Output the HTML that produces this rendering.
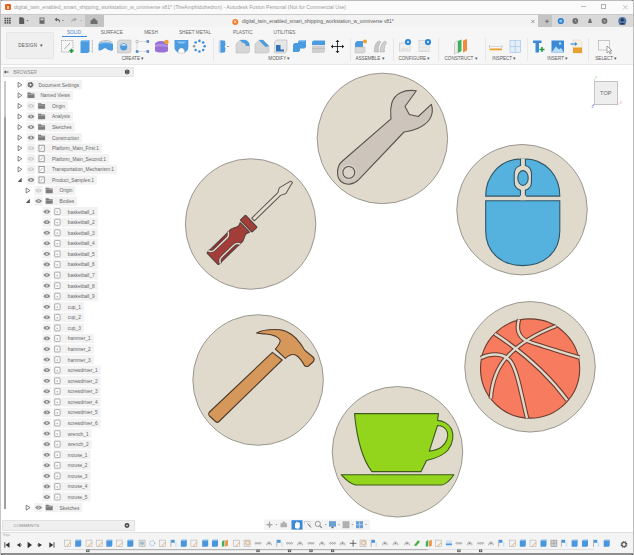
<!DOCTYPE html><html><head><meta charset="utf-8"><style>
*{margin:0;padding:0;box-sizing:border-box}
html,body{width:634px;height:555px;overflow:hidden;background:#fff;font-family:"Liberation Sans",sans-serif}
.ab{position:absolute}
.t{position:absolute;white-space:nowrap;color:#555;font-size:4.8px;line-height:6px}
.pl{position:absolute;background:#efefef;height:9px}
</style></head><body>
<div class="ab" style="left:0;top:0;width:634px;height:14px;background:#fafafa;border-top:1px solid #bdbdbd"></div>
<div class="ab" style="left:5px;top:4px;width:6px;height:6px;background:#e4601c;border-radius:1.2px"></div>
<div class="ab" style="left:7px;top:5.5px;width:2px;height:3px;background:#fbd0b0;border-radius:0.5px"></div>
<div class="t" style="left:14px;top:4.2px;font-size:5.15px;color:#9c9c9c;">digital_twin_enabled_smart_shipping_workstation_w_omniverse v81* (TheAmphiduhedron) - Autodesk Fusion Personal (Not for Commercial Use)</div>
<div class="ab" style="left:580.5px;top:5.8px;width:5px;height:0.8px;background:#bbb"></div>
<div class="ab" style="left:601px;top:3.7px;width:5px;height:5px;border:0.8px solid #b0b0b0"></div>
<svg class="ab" style="left:621.5px;top:3.5px" width="7" height="7"><path d="M1,1 L5.5,5.5 M5.5,1 L1,5.5" stroke="#b8b8b8" stroke-width="0.8"/></svg>
<div class="ab" style="left:0;top:14px;width:634px;height:13px;background:#d9d9d9;border-top:1px solid #cacaca"></div>
<div class="ab" style="left:104px;top:15px;width:434px;height:12px;background:#f3f3f3"></div>
<div class="ab" style="left:85px;top:15px;width:19px;height:12px;background:#c3c3c3"></div>
<div class="ab" style="left:538px;top:15px;width:14px;height:12px;background:#c4c4c4"></div>
<svg class="ab" style="left:0;top:0" width="634" height="30"><rect x="4.5" y="17.7" width="1.6" height="1.6" fill="#505050"/><rect x="4.5" y="19.9" width="1.6" height="1.6" fill="#505050"/><rect x="4.5" y="22.1" width="1.6" height="1.6" fill="#505050"/><rect x="6.8" y="17.7" width="1.6" height="1.6" fill="#505050"/><rect x="6.8" y="19.9" width="1.6" height="1.6" fill="#505050"/><rect x="6.8" y="22.1" width="1.6" height="1.6" fill="#505050"/><rect x="9.1" y="17.7" width="1.6" height="1.6" fill="#505050"/><rect x="9.1" y="19.9" width="1.6" height="1.6" fill="#505050"/><rect x="9.1" y="22.1" width="1.6" height="1.6" fill="#505050"/><path d="M19.2,17.3 L22.5,17.3 L24.2,19 L24.2,24 L19.2,24 Z" fill="#5a5a5a"/><path d="M26.5,20 L28.5,20 L27.5,21.2 Z" fill="#666"/><rect x="39.5" y="17.5" width="5" height="6.3" fill="#6a6a6a"/><rect x="40.5" y="18.3" width="3" height="2" fill="#cfcfcf"/><path d="M54.5,19.5 L57,17.5 L57,18.8 C59.5,18.8 60.5,20.5 60,23 C59.3,21 58.5,20.3 57,20.3 L57,21.5 Z" fill="#666"/><path d="M62,20 L64,20 L63,21.2 Z" fill="#777"/><path d="M77,19.5 L74.5,17.5 L74.5,18.8 C72,18.8 71,20.5 71.5,23 C72.2,21 73,20.3 74.5,20.3 L74.5,21.5 Z" fill="#aaa"/><path d="M80,20 L82,20 L81,21.2 Z" fill="#aaa"/><path d="M90.5,21 L94,18 L97.5,21 L97.5,24 L90.5,24 Z" fill="#6f6f6f"/><circle cx="235.3" cy="22" r="3" fill="#f07a28"/><path d="M233.8,20.5 L236.5,23 M233.8,23 L236.5,20.5" stroke="#fff" stroke-width="0.7"/><path d="M531.3,19.8 L534.5,23 M534.5,19.8 L531.3,23" stroke="#777" stroke-width="0.7"/><path d="M545,21.3 L549,21.3 M547,19.3 L547,23.3" stroke="#666" stroke-width="0.8"/><circle cx="560.8" cy="21" r="3.1" fill="#2b7fd0"/><circle cx="560.8" cy="21" r="1.6" fill="#8cc3f0"/><circle cx="575.3" cy="21" r="2.9" fill="#6e6e6e"/><path d="M575.3,19.5 L575.3,21 L576.5,21.7" stroke="#ddd" stroke-width="0.6" fill="none"/><path d="M588,23 C588.5,22 588.5,19 590,18.3 C591.5,19 591.5,22 592,23 Z" fill="#707070"/><circle cx="604.5" cy="21" r="2.9" fill="#707070"/><text x="603.3" y="22.8" font-size="4" fill="#eee" font-family="Liberation Sans">?</text><circle cx="622.3" cy="21" r="4" fill="#5577aa"/><circle cx="622.3" cy="19.8" r="1.6" fill="#223355"/><path d="M619.3,24.5 C620,22.5 624.6,22.5 625.3,24.5 Z" fill="#223355"/></svg>
<div class="t" style="left:242px;top:19.3px;font-size:4.95px;color:#5c5c5c;">digital_twin_enabled_smart_shipping_workstation_w_omniverse v81*</div>
<div class="ab" style="left:0;top:27px;width:634px;height:37.5px;background:#f6f6f6;border-bottom:1px solid #e6e6e6"></div>
<div class="ab" style="left:5.7px;top:32px;width:48px;height:27px;background:#efefef;border:1px solid #e6e6e6;border-radius:1px"></div>
<div class="t" style="left:18.3px;top:42.8px;font-size:4.6px;color:#555;letter-spacing:0.25px">DESIGN &nbsp;&#9662;</div>
<div class="t" style="left:24px;width:100px;text-align:center;top:30.4px;font-size:4.7px;color:#4a86c5;">SOLID</div>
<div class="t" style="left:61.8px;width:100px;text-align:center;top:30.4px;font-size:4.7px;color:#666;">SURFACE</div>
<div class="t" style="left:101px;width:100px;text-align:center;top:30.4px;font-size:4.7px;color:#666;">MESH</div>
<div class="t" style="left:145px;width:100px;text-align:center;top:30.4px;font-size:4.7px;color:#666;">SHEET METAL</div>
<div class="t" style="left:192.8px;width:100px;text-align:center;top:30.4px;font-size:4.7px;color:#666;">PLASTIC</div>
<div class="t" style="left:234.5px;width:100px;text-align:center;top:30.4px;font-size:4.7px;color:#666;">UTILITIES</div>
<div class="ab" style="left:61.5px;top:36.3px;width:25px;height:1.2px;background:#3a8ad8"></div>
<div class="t" style="left:83px;width:100px;text-align:center;top:56.1px;font-size:4.6px;color:#5a5a5a;">CREATE &#9662;</div>
<div class="t" style="left:229.39999999999998px;width:100px;text-align:center;top:56.1px;font-size:4.6px;color:#5a5a5a;">MODIFY &#9662;</div>
<div class="t" style="left:320px;width:100px;text-align:center;top:56.1px;font-size:4.6px;color:#5a5a5a;">ASSEMBLE &#9662;</div>
<div class="t" style="left:364.4px;width:100px;text-align:center;top:56.1px;font-size:4.6px;color:#5a5a5a;">CONFIGURE &#9662;</div>
<div class="t" style="left:411px;width:100px;text-align:center;top:56.1px;font-size:4.6px;color:#5a5a5a;">CONSTRUCT &#9662;</div>
<div class="t" style="left:454.3px;width:100px;text-align:center;top:56.1px;font-size:4.6px;color:#5a5a5a;">INSPECT &#9662;</div>
<div class="t" style="left:507.70000000000005px;width:100px;text-align:center;top:56.1px;font-size:4.6px;color:#5a5a5a;">INSERT &#9662;</div>
<div class="t" style="left:556.3px;width:100px;text-align:center;top:56.1px;font-size:4.6px;color:#5a5a5a;">SELECT &#9662;</div>
<svg class="ab" style="left:0;top:27px" width="634" height="38" viewBox="0 27 634 38"><rect x="213" y="38" width="0.7" height="23" fill="#e0e0e0"/><rect x="350" y="38" width="0.7" height="23" fill="#e0e0e0"/><rect x="393" y="38" width="0.7" height="23" fill="#e0e0e0"/><rect x="438.4" y="38" width="0.7" height="23" fill="#e0e0e0"/><rect x="485" y="38" width="0.7" height="23" fill="#e0e0e0"/><rect x="527.4" y="38" width="0.7" height="23" fill="#e0e0e0"/><rect x="588" y="38" width="0.7" height="23" fill="#e0e0e0"/><rect x="61.5" y="40.5" width="11.5" height="11.5" fill="none" stroke="#777" stroke-width="0.6" stroke-dasharray="1 0.8"/><path d="M64.5,49 L70,43" stroke="#777" stroke-width="0.6"/><path d="M69.3,50.8 L73.5,50.8 M71.4,48.7 L71.4,52.9" stroke="#1e9a3c" stroke-width="1.6"/><path d="M80.5,41.5 L82,40 L89.5,40 L89.5,51.5 L88,53 L80.5,53 Z" fill="#4a9be0"/><path d="M80.5,41.5 L82,40 L89.5,40 L88,41.5 Z" fill="#8cc4f0"/><path d="M92.3,40 L92.3,53" stroke="#555" stroke-width="0.5" stroke-dasharray="0.8 0.6"/><path d="M98.5,44 C102,41 109,41 113,44 L113,50 C111,51.5 109.5,50 108,50 C106,47.5 104,47.5 102,50 C100.5,50 99.5,51.5 98.5,50 Z" fill="#4a9be0"/><path d="M98.5,44 C102,41 109,41 113,44 C109,43 102,43 98.5,44 Z" fill="#8cc4f0"/><path d="M99,42.5 C103,40 109,40 112.5,42.5" stroke="#555" stroke-width="0.4" fill="none"/><path d="M117.5,41.5 L119,40 L131,40 L131,51.5 L129.5,53 L117.5,53 Z" fill="#d8d8d8" stroke="#aaa" stroke-width="0.4"/><circle cx="123.7" cy="46.8" r="3.6" fill="#4a9be0"/><path d="M121,45.5 C122,43.5 125,43.5 126.5,45.5 Z" fill="#e8f2fb"/><circle cx="137" cy="41.5" r="1.3" fill="none" stroke="#999" stroke-width="0.6"/><rect x="146.5" y="40.2" width="2.6" height="2.6" fill="#4a86c0"/><rect x="135.8" y="50.2" width="2.6" height="2.6" fill="#4a86c0"/><rect x="146.5" y="50.2" width="2.6" height="2.6" fill="#4a86c0"/><path d="M138.5,41.5 L146.5,41.5 M137,43 L137,50 M138.5,51.5 L146.5,51.5" stroke="#999" stroke-width="0.5" stroke-dasharray="0.8 0.6"/><path d="M155,45 C155,42 158,41 161,41 C164,41 168,42.5 168,45.5 L168,51 C166,53 157,53 155,51 Z" fill="#9a72d6"/><path d="M155,45 C158,44 164,44 168,45.5 L168,47 C164,46 158,46 155,47Z" fill="#b596e6"/><circle cx="166.5" cy="42" r="2.2" fill="#f0a02a"/><path d="M174.5,40 L188.3,40 L188.3,47 C188.3,51 185,53 181.4,53 C177.8,53 174.5,51 174.5,47 Z" fill="#4a9be0"/><path d="M176.5,41.5 L186.3,41.5 L184,43.5 L178.8,43.5 Z" fill="#8cc4f0"/><path d="M178,53 C178,49.5 179.5,48 181.4,48 C183.3,48 184.8,49.5 184.8,53 Z" fill="#fff" stroke="#999" stroke-width="0.4"/><circle cx="199.40" cy="40.90" r="1.3" fill="#3f8fd8"/><circle cx="203.15" cy="42.45" r="1.3" fill="#3f8fd8"/><circle cx="204.70" cy="46.20" r="1.3" fill="#3f8fd8"/><circle cx="203.15" cy="49.95" r="1.3" fill="#3f8fd8"/><circle cx="199.40" cy="51.50" r="1.3" fill="#3f8fd8"/><circle cx="195.65" cy="49.95" r="1.3" fill="#3f8fd8"/><circle cx="194.10" cy="46.20" r="1.3" fill="#999"/><circle cx="195.65" cy="42.45" r="1.3" fill="#3f8fd8"/><path d="M218.5,40.5 L223,40 L223,53 L218.5,52.5 Z" fill="#c8d8e8"/><path d="M220.5,40.3 L225,40.8 L225.5,45 L224.5,46.5 L225.5,48 L225,52.3 L220.5,52.7 Z" fill="#4a9be0"/><circle cx="228" cy="46.5" r="0.6" fill="#333"/><path d="M236,44 L240,40 L245,40 C248,40.5 249.5,43 249.5,46 L249.5,52 L247.5,53 L236,53 Z" fill="#d6d6d6" stroke="#aaa" stroke-width="0.4"/><path d="M240,40 L245,40 C248,40.5 249.5,43 249.5,46 L246,46 C245.5,44 244,42.5 242,42.5 Z" fill="#4a9be0"/><path d="M255,44 L259,40 L263,40 L269,46 L269,52 L267,53 L255,53 Z" fill="#d6d6d6" stroke="#aaa" stroke-width="0.4"/><path d="M259,40 L263,40 L269,46 L265.5,47 L261,42.5 Z" fill="#4a9be0"/><path d="M274.5,42 L276.5,40 L287,40 L287,51 L285,53 L274.5,53 Z" fill="#e6e6e6" stroke="#999" stroke-width="0.4"/><path d="M276,45 L280.5,45 L280.5,49.5 L284,49.5 L284,51.5 L276,51.5 Z" fill="#2f72b8"/><path d="M293,44.5 L294.5,43 L300,43 L300,50.5 L298.5,52 L293,52 Z" fill="#4a9be0"/><path d="M298,41.5 L299.5,40 L306,40 L306,47 L304.5,48.5 L298,48.5 Z" fill="#4a9be0"/><path d="M298,41.5 L299.5,40 L306,40 L304.5,41.5 Z" fill="#8cc4f0"/><path d="M312,42 L313.5,40.5 L325,40.5 L325,45 L312,45 Z" fill="#4a9be0"/><path d="M312,45.5 L325,45.5 L325,51.5 L323.5,53 L312,53 Z" fill="#d0d0d0"/><path d="M312,48.5 L325,48.5" stroke="#aaa" stroke-width="0.4"/><path d="M337.5,40 L337.5,53 M331,46.5 L344,46.5" stroke="#222" stroke-width="0.9"/><path d="M335.5,42 L337.5,40 L339.5,42 Z M335.5,51 L337.5,53 L339.5,51 Z M333,44.5 L331,46.5 L333,48.5 Z M342,44.5 L344,46.5 L342,48.5 Z" fill="#222"/><path d="M355,43 L357,41 L363,41 L363,47 L355,47 Z" fill="#4a9be0"/><path d="M355,47 L365,47 L365,52 L363.5,53 L355,53 Z" fill="#d9d9d9" stroke="#aaa" stroke-width="0.4"/><circle cx="365" cy="41.5" r="2" fill="#f0a02a"/><path d="M374.5,52 C374,47 375.5,42 379,41 L381,42 C378.5,44 378,48 378.5,52 Z" fill="#c8c8c8" stroke="#999" stroke-width="0.4"/><path d="M380,52 C380,47 382,42 385.5,41 L386.5,43 C384.5,45 384,49 384.5,52 Z" fill="#d0d0d0" stroke="#999" stroke-width="0.4"/><rect x="399.5" y="43" width="10.5" height="8" fill="#efefef" stroke="#bbb" stroke-width="0.5"/><path d="M401,49 L408,49" stroke="#bbb" stroke-width="0.5"/><circle cx="408" cy="42" r="3.1" fill="#2e86d8"/><circle cx="408" cy="42" r="1.1" fill="#e0f0ff"/><rect x="419" y="40.5" width="10" height="11" fill="#efefef" stroke="#bbb" stroke-width="0.5"/><path d="M420.5,44 L427,44 M420.5,47 L427,47 M420.5,50 L427,50" stroke="#ccc" stroke-width="0.5"/><circle cx="428" cy="42" r="3.1" fill="#2e86d8"/><circle cx="428" cy="42" r="1.1" fill="#e0f0ff"/><path d="M454.5,43 L458,40.5 L458,52 L454.5,54 Z" fill="#ececec" stroke="#999" stroke-width="0.4"/><path d="M458,41 L461.5,39.5 L461.5,51 L458,53 Z" fill="#3db05a"/><path d="M463,40.5 L467,39 L467,50.5 L463,52.5 Z" fill="#f08c40"/><path d="M489.5,45 L489.5,48 M502,45 L502,48" stroke="#999" stroke-width="0.5"/><rect x="489.5" y="46" width="12.5" height="0.5" fill="#bbb"/><rect x="489.5" y="48.5" width="12.5" height="1.8" fill="#f0a030"/><rect x="510" y="40.5" width="10.5" height="12" fill="#e4eef8" stroke="#9bbfe0" stroke-width="0.6"/><path d="M515.2,40.5 L515.2,52.5 M510,46.5 L520.5,46.5" stroke="#9bbfe0" stroke-width="0.6"/><path d="M533,40.5 L541.5,40.5 L541.5,43 L539,43 L539,52.5 L535.5,52.5 L535.5,43 L533,43 Z" fill="#3a8ad8"/><path d="M539.5,49.5 L544.5,49.5 M542,47 L542,52" stroke="#1e9a3c" stroke-width="1.5"/><rect x="551.5" y="40.5" width="12.5" height="12" fill="#3a8ad8"/><path d="M551.5,52.5 L556,46.5 L559,49.5 L561,48 L564,52.5 Z" fill="#bcdcf6"/><circle cx="560" cy="43.5" r="1.2" fill="#bcdcf6"/><path d="M573,40 L579.5,40 L582,42.5 L582,53 L573,53 Z" fill="#f6f0e0" stroke="#ccb" stroke-width="0.4"/><rect x="573" y="47.5" width="9" height="5.5" fill="#e8a030"/><path d="M570.5,44 L576,44" stroke="#3a8ad8" stroke-width="1.2"/><path d="M575,42 L577.5,44 L575,46 Z" fill="#3a8ad8"/><rect x="598.5" y="40.5" width="11" height="9.5" fill="none" stroke="#aaa" stroke-width="0.6"/><path d="M607,46 L607,53 L608.8,51.3 L610.3,54 L611.3,53.5 L609.8,50.8 L612,50.8 Z" fill="#fff" stroke="#555" stroke-width="0.5"/></svg>
<div class="ab" style="left:2.5px;top:66.9px;width:131.5px;height:9.8px;background:#efefef;border:0.7px solid #e4e4e4"></div>
<svg class="ab" style="left:0;top:66px" width="140" height="14"><path d="M4.5,6 L8.5,6 M4.5,6 L6,4.8 M4.5,6 L6,7.2" stroke="#444" stroke-width="0.9" fill="none"/><circle cx="127.2" cy="6" r="2.4" fill="#444"/><path d="M126,5.6 L127.2,4.5 L128.4,5.6 M126,6.6 L127.2,7.6 L128.4,6.6" stroke="#eee" stroke-width="0.5" fill="none"/></svg>
<div class="t" style="left:13.2px;top:70.2px;font-size:4.6px;color:#8c8c8c;">BROWSER</div>
<div class="ab" style="left:4.1px;top:80.5px;width:2.4px;height:36px;background:#c9c9c9"></div><div class="ab" style="left:4.1px;top:116.5px;width:2.4px;height:392.5px;background:#a0a0a0;border-radius:0.5px"></div>
<svg class="ab" style="left:0;top:0" width="140" height="520"><path d="M18.099999999999998,82.3 L21.9,84.8 L18.099999999999998,87.3 Z" fill="#fff" stroke="#666" stroke-width="0.8" stroke-linejoin="round"/><rect x="26.0" y="80.2" width="56.15174999999999" height="9.2" fill="#f2f2f2"/><circle cx="30.5" cy="84.8" r="2.2" fill="none" stroke="#555" stroke-width="1.4" stroke-dasharray="0.9 0.5"/><circle cx="30.5" cy="84.8" r="1.6" fill="none" stroke="#555" stroke-width="1"/><path d="M18.099999999999998,92.87 L21.9,95.37 L18.099999999999998,97.87 Z" fill="#fff" stroke="#666" stroke-width="0.8" stroke-linejoin="round"/><rect x="26.5" y="90.77000000000001" width="46.423" height="9.2" fill="#f2f2f2"/><path d="M27.5,92.57000000000001 L30.2,92.57000000000001 L31.2,93.47 L34.5,93.47 L34.5,98.07000000000001 L27.5,98.07000000000001 Z" fill="#7c7c7c"/><rect x="27.5" y="94.27000000000001" width="7" height="0.6" fill="#b8b8b8"/><path d="M18.099999999999998,103.44 L21.9,105.94 L18.099999999999998,108.44 Z" fill="#fff" stroke="#666" stroke-width="0.8" stroke-linejoin="round"/><rect x="26.7" y="101.34" width="8.6" height="9.2" fill="#f2f2f2"/><path d="M27.6,105.94 C29.3,103.44 32.7,103.44 34.4,105.94 C32.7,108.44 29.3,108.44 27.6,105.94 Z" fill="#cfcfcf"/><circle cx="31" cy="105.94" r="1.05" fill="#f2f2f2"/><circle cx="31" cy="105.94" r="0.5" fill="#cfcfcf"/><rect x="37.1" y="101.34" width="30.703250000000004" height="9.2" fill="#f2f2f2"/><path d="M38.1,103.14 L40.800000000000004,103.14 L41.800000000000004,104.03999999999999 L45.1,104.03999999999999 L45.1,108.64 L38.1,108.64 Z" fill="#7c7c7c"/><rect x="38.1" y="104.84" width="7" height="0.6" fill="#b8b8b8"/><path d="M18.099999999999998,114.00999999999999 L21.9,116.50999999999999 L18.099999999999998,119.00999999999999 Z" fill="#fff" stroke="#666" stroke-width="0.8" stroke-linejoin="round"/><rect x="26.7" y="111.91" width="8.6" height="9.2" fill="#f2f2f2"/><path d="M27.6,116.50999999999999 C29.3,114.00999999999999 32.7,114.00999999999999 34.4,116.50999999999999 C32.7,119.00999999999999 29.3,119.00999999999999 27.6,116.50999999999999 Z" fill="#8a8a8a"/><circle cx="31" cy="116.50999999999999" r="1.05" fill="#f2f2f2"/><circle cx="31" cy="116.50999999999999" r="0.5" fill="#8a8a8a"/><rect x="37.1" y="111.91" width="35.77325" height="9.2" fill="#f2f2f2"/><path d="M38.1,113.71 L40.800000000000004,113.71 L41.800000000000004,114.60999999999999 L45.1,114.60999999999999 L45.1,119.21 L38.1,119.21 Z" fill="#7c7c7c"/><rect x="38.1" y="115.41" width="7" height="0.6" fill="#b8b8b8"/><path d="M18.099999999999998,124.58 L21.9,127.08 L18.099999999999998,129.57999999999998 Z" fill="#fff" stroke="#666" stroke-width="0.8" stroke-linejoin="round"/><rect x="26.7" y="122.48" width="8.6" height="9.2" fill="#f2f2f2"/><path d="M27.6,127.08 C29.3,124.58 32.7,124.58 34.4,127.08 C32.7,129.57999999999998 29.3,129.57999999999998 27.6,127.08 Z" fill="#8a8a8a"/><circle cx="31" cy="127.08" r="1.05" fill="#f2f2f2"/><circle cx="31" cy="127.08" r="0.5" fill="#8a8a8a"/><rect x="37.1" y="122.48" width="37.642999999999994" height="9.2" fill="#f2f2f2"/><path d="M38.1,124.28 L40.800000000000004,124.28 L41.800000000000004,125.17999999999999 L45.1,125.17999999999999 L45.1,129.78 L38.1,129.78 Z" fill="#7c7c7c"/><rect x="38.1" y="125.98" width="7" height="0.6" fill="#b8b8b8"/><path d="M18.099999999999998,135.15 L21.9,137.65 L18.099999999999998,140.15 Z" fill="#fff" stroke="#666" stroke-width="0.8" stroke-linejoin="round"/><rect x="26.7" y="133.05" width="8.6" height="9.2" fill="#f2f2f2"/><path d="M27.6,137.65 C29.3,135.15 32.7,135.15 34.4,137.65 C32.7,140.15 29.3,140.15 27.6,137.65 Z" fill="#8a8a8a"/><circle cx="31" cy="137.65" r="1.05" fill="#f2f2f2"/><circle cx="31" cy="137.65" r="0.5" fill="#8a8a8a"/><rect x="37.1" y="133.05" width="44.844500000000004" height="9.2" fill="#f2f2f2"/><path d="M38.1,134.85 L40.800000000000004,134.85 L41.800000000000004,135.75 L45.1,135.75 L45.1,140.35 L38.1,140.35 Z" fill="#7c7c7c"/><rect x="38.1" y="136.55" width="7" height="0.6" fill="#b8b8b8"/><path d="M18.099999999999998,145.72 L21.9,148.22 L18.099999999999998,150.72 Z" fill="#fff" stroke="#666" stroke-width="0.8" stroke-linejoin="round"/><rect x="26.7" y="143.62" width="8.6" height="9.2" fill="#f2f2f2"/><path d="M27.6,148.22 C29.3,145.72 32.7,145.72 34.4,148.22 C32.7,150.72 29.3,150.72 27.6,148.22 Z" fill="#cfcfcf"/><circle cx="31" cy="148.22" r="1.05" fill="#f2f2f2"/><circle cx="31" cy="148.22" r="0.5" fill="#cfcfcf"/><rect x="37.1" y="143.62" width="64.84475" height="9.2" fill="#f2f2f2"/><rect x="39.0" y="145.22" width="5.2" height="6" fill="#fff" stroke="#777" stroke-width="0.7"/><path d="M40.4,149.72 L42.6,146.72" stroke="#888" stroke-width="0.6"/><path d="M18.099999999999998,156.29000000000002 L21.9,158.79000000000002 L18.099999999999998,161.29000000000002 Z" fill="#fff" stroke="#666" stroke-width="0.8" stroke-linejoin="round"/><rect x="26.7" y="154.19000000000003" width="8.6" height="9.2" fill="#f2f2f2"/><path d="M27.6,158.79000000000002 C29.3,156.29000000000002 32.7,156.29000000000002 34.4,158.79000000000002 C32.7,161.29000000000002 29.3,161.29000000000002 27.6,158.79000000000002 Z" fill="#cfcfcf"/><circle cx="31" cy="158.79000000000002" r="1.05" fill="#f2f2f2"/><circle cx="31" cy="158.79000000000002" r="0.5" fill="#cfcfcf"/><rect x="37.1" y="154.19000000000003" width="71.7935" height="9.2" fill="#f2f2f2"/><rect x="39.0" y="155.79000000000002" width="5.2" height="6" fill="#fff" stroke="#777" stroke-width="0.7"/><path d="M40.4,160.29000000000002 L42.6,157.29000000000002" stroke="#888" stroke-width="0.6"/><path d="M18.099999999999998,166.86 L21.9,169.36 L18.099999999999998,171.86 Z" fill="#fff" stroke="#666" stroke-width="0.8" stroke-linejoin="round"/><rect x="26.7" y="164.76000000000002" width="8.6" height="9.2" fill="#f2f2f2"/><path d="M27.6,169.36 C29.3,166.86 32.7,166.86 34.4,169.36 C32.7,171.86 29.3,171.86 27.6,169.36 Z" fill="#cfcfcf"/><circle cx="31" cy="169.36" r="1.05" fill="#f2f2f2"/><circle cx="31" cy="169.36" r="0.5" fill="#cfcfcf"/><rect x="37.1" y="164.76000000000002" width="79.88075" height="9.2" fill="#f2f2f2"/><rect x="39.0" y="166.36" width="5.2" height="6" fill="#fff" stroke="#777" stroke-width="0.7"/><path d="M40.4,170.86 L42.6,167.86" stroke="#888" stroke-width="0.6"/><path d="M21.7,177.63 L21.7,181.93 L17.7,181.93 Z" fill="#555"/><rect x="26.7" y="175.33" width="8.6" height="9.2" fill="#f2f2f2"/><path d="M27.6,179.93 C29.3,177.43 32.7,177.43 34.4,179.93 C32.7,182.43 29.3,182.43 27.6,179.93 Z" fill="#8a8a8a"/><circle cx="31" cy="179.93" r="1.05" fill="#f2f2f2"/><circle cx="31" cy="179.93" r="0.5" fill="#8a8a8a"/><rect x="37.1" y="175.33" width="59.7875" height="9.2" fill="#f2f2f2"/><rect x="39.0" y="176.93" width="5.2" height="6" fill="#fff" stroke="#777" stroke-width="0.7"/><path d="M40.4,181.43 L42.6,178.43" stroke="#888" stroke-width="0.6"/><path d="M26.2,188.0 L30.0,190.5 L26.2,193.0 Z" fill="#fff" stroke="#666" stroke-width="0.8" stroke-linejoin="round"/><rect x="34.300000000000004" y="185.9" width="8.6" height="9.2" fill="#f2f2f2"/><path d="M35.2,190.5 C36.9,188.0 40.300000000000004,188.0 42.0,190.5 C40.300000000000004,193.0 36.9,193.0 35.2,190.5 Z" fill="#cfcfcf"/><circle cx="38.6" cy="190.5" r="1.05" fill="#f2f2f2"/><circle cx="38.6" cy="190.5" r="0.5" fill="#cfcfcf"/><rect x="44.7" y="185.9" width="30.703249999999997" height="9.2" fill="#f2f2f2"/><path d="M45.7,187.7 L48.400000000000006,187.7 L49.400000000000006,188.6 L52.7,188.6 L52.7,193.2 L45.7,193.2 Z" fill="#7c7c7c"/><rect x="45.7" y="189.4" width="7" height="0.6" fill="#b8b8b8"/><path d="M29.8,198.76999999999998 L29.8,203.07 L25.8,203.07 Z" fill="#555"/><rect x="34.300000000000004" y="196.47" width="8.6" height="9.2" fill="#f2f2f2"/><path d="M35.2,201.07 C36.9,198.57 40.300000000000004,198.57 42.0,201.07 C40.300000000000004,203.57 36.9,203.57 35.2,201.07 Z" fill="#8a8a8a"/><circle cx="38.6" cy="201.07" r="1.05" fill="#f2f2f2"/><circle cx="38.6" cy="201.07" r="0.5" fill="#8a8a8a"/><rect x="44.7" y="196.47" width="32.57599999999999" height="9.2" fill="#f2f2f2"/><path d="M45.7,198.26999999999998 L48.400000000000006,198.26999999999998 L49.400000000000006,199.17 L52.7,199.17 L52.7,203.76999999999998 L45.7,203.76999999999998 Z" fill="#7c7c7c"/><rect x="45.7" y="199.97" width="7" height="0.6" fill="#b8b8b8"/><rect x="42.5" y="207.04" width="8.6" height="9.2" fill="#f2f2f2"/><path d="M43.4,211.64 C45.099999999999994,209.14 48.5,209.14 50.199999999999996,211.64 C48.5,214.14 45.099999999999994,214.14 43.4,211.64 Z" fill="#8a8a8a"/><circle cx="46.8" cy="211.64" r="1.05" fill="#f2f2f2"/><circle cx="46.8" cy="211.64" r="0.5" fill="#8a8a8a"/><rect x="52.9" y="207.04" width="44.85125" height="9.2" fill="#f2f2f2"/><rect x="54.699999999999996" y="208.73999999999998" width="5.4" height="5.8" fill="#fff" stroke="#8c8c8c" stroke-width="0.7" rx="0.6"/><rect x="56.6" y="211.33999999999997" width="1.4" height="1.4" fill="#aaa"/><rect x="42.5" y="217.60999999999999" width="8.6" height="9.2" fill="#f2f2f2"/><path d="M43.4,222.20999999999998 C45.099999999999994,219.70999999999998 48.5,219.70999999999998 50.199999999999996,222.20999999999998 C48.5,224.70999999999998 45.099999999999994,224.70999999999998 43.4,222.20999999999998 Z" fill="#8a8a8a"/><circle cx="46.8" cy="222.20999999999998" r="1.05" fill="#f2f2f2"/><circle cx="46.8" cy="222.20999999999998" r="0.5" fill="#8a8a8a"/><rect x="52.9" y="217.60999999999999" width="44.85125" height="9.2" fill="#f2f2f2"/><rect x="54.699999999999996" y="219.30999999999997" width="5.4" height="5.8" fill="#fff" stroke="#8c8c8c" stroke-width="0.7" rx="0.6"/><rect x="56.6" y="221.90999999999997" width="1.4" height="1.4" fill="#aaa"/><rect x="42.5" y="228.18000000000004" width="8.6" height="9.2" fill="#f2f2f2"/><path d="M43.4,232.78000000000003 C45.099999999999994,230.28000000000003 48.5,230.28000000000003 50.199999999999996,232.78000000000003 C48.5,235.28000000000003 45.099999999999994,235.28000000000003 43.4,232.78000000000003 Z" fill="#8a8a8a"/><circle cx="46.8" cy="232.78000000000003" r="1.05" fill="#f2f2f2"/><circle cx="46.8" cy="232.78000000000003" r="0.5" fill="#8a8a8a"/><rect x="52.9" y="228.18000000000004" width="44.85125" height="9.2" fill="#f2f2f2"/><rect x="54.699999999999996" y="229.88000000000002" width="5.4" height="5.8" fill="#fff" stroke="#8c8c8c" stroke-width="0.7" rx="0.6"/><rect x="56.6" y="232.48000000000002" width="1.4" height="1.4" fill="#aaa"/><rect x="42.5" y="238.75000000000003" width="8.6" height="9.2" fill="#f2f2f2"/><path d="M43.4,243.35000000000002 C45.099999999999994,240.85000000000002 48.5,240.85000000000002 50.199999999999996,243.35000000000002 C48.5,245.85000000000002 45.099999999999994,245.85000000000002 43.4,243.35000000000002 Z" fill="#8a8a8a"/><circle cx="46.8" cy="243.35000000000002" r="1.05" fill="#f2f2f2"/><circle cx="46.8" cy="243.35000000000002" r="0.5" fill="#8a8a8a"/><rect x="52.9" y="238.75000000000003" width="44.85125" height="9.2" fill="#f2f2f2"/><rect x="54.699999999999996" y="240.45000000000002" width="5.4" height="5.8" fill="#fff" stroke="#8c8c8c" stroke-width="0.7" rx="0.6"/><rect x="56.6" y="243.05" width="1.4" height="1.4" fill="#aaa"/><rect x="42.5" y="249.32000000000002" width="8.6" height="9.2" fill="#f2f2f2"/><path d="M43.4,253.92000000000002 C45.099999999999994,251.42000000000002 48.5,251.42000000000002 50.199999999999996,253.92000000000002 C48.5,256.42 45.099999999999994,256.42 43.4,253.92000000000002 Z" fill="#8a8a8a"/><circle cx="46.8" cy="253.92000000000002" r="1.05" fill="#f2f2f2"/><circle cx="46.8" cy="253.92000000000002" r="0.5" fill="#8a8a8a"/><rect x="52.9" y="249.32000000000002" width="44.85125" height="9.2" fill="#f2f2f2"/><rect x="54.699999999999996" y="251.02" width="5.4" height="5.8" fill="#fff" stroke="#8c8c8c" stroke-width="0.7" rx="0.6"/><rect x="56.6" y="253.62" width="1.4" height="1.4" fill="#aaa"/><rect x="42.5" y="259.89" width="8.6" height="9.2" fill="#f2f2f2"/><path d="M43.4,264.49 C45.099999999999994,261.99 48.5,261.99 50.199999999999996,264.49 C48.5,266.99 45.099999999999994,266.99 43.4,264.49 Z" fill="#8a8a8a"/><circle cx="46.8" cy="264.49" r="1.05" fill="#f2f2f2"/><circle cx="46.8" cy="264.49" r="0.5" fill="#8a8a8a"/><rect x="52.9" y="259.89" width="44.85125" height="9.2" fill="#f2f2f2"/><rect x="54.699999999999996" y="261.59000000000003" width="5.4" height="5.8" fill="#fff" stroke="#8c8c8c" stroke-width="0.7" rx="0.6"/><rect x="56.6" y="264.19" width="1.4" height="1.4" fill="#aaa"/><rect x="42.5" y="270.46" width="8.6" height="9.2" fill="#f2f2f2"/><path d="M43.4,275.06 C45.099999999999994,272.56 48.5,272.56 50.199999999999996,275.06 C48.5,277.56 45.099999999999994,277.56 43.4,275.06 Z" fill="#8a8a8a"/><circle cx="46.8" cy="275.06" r="1.05" fill="#f2f2f2"/><circle cx="46.8" cy="275.06" r="0.5" fill="#8a8a8a"/><rect x="52.9" y="270.46" width="44.85125" height="9.2" fill="#f2f2f2"/><rect x="54.699999999999996" y="272.16" width="5.4" height="5.8" fill="#fff" stroke="#8c8c8c" stroke-width="0.7" rx="0.6"/><rect x="56.6" y="274.76" width="1.4" height="1.4" fill="#aaa"/><rect x="42.5" y="281.03" width="8.6" height="9.2" fill="#f2f2f2"/><path d="M43.4,285.63 C45.099999999999994,283.13 48.5,283.13 50.199999999999996,285.63 C48.5,288.13 45.099999999999994,288.13 43.4,285.63 Z" fill="#8a8a8a"/><circle cx="46.8" cy="285.63" r="1.05" fill="#f2f2f2"/><circle cx="46.8" cy="285.63" r="0.5" fill="#8a8a8a"/><rect x="52.9" y="281.03" width="44.85125" height="9.2" fill="#f2f2f2"/><rect x="54.699999999999996" y="282.73" width="5.4" height="5.8" fill="#fff" stroke="#8c8c8c" stroke-width="0.7" rx="0.6"/><rect x="56.6" y="285.33" width="1.4" height="1.4" fill="#aaa"/><rect x="42.5" y="291.59999999999997" width="8.6" height="9.2" fill="#f2f2f2"/><path d="M43.4,296.2 C45.099999999999994,293.7 48.5,293.7 50.199999999999996,296.2 C48.5,298.7 45.099999999999994,298.7 43.4,296.2 Z" fill="#8a8a8a"/><circle cx="46.8" cy="296.2" r="1.05" fill="#f2f2f2"/><circle cx="46.8" cy="296.2" r="0.5" fill="#8a8a8a"/><rect x="52.9" y="291.59999999999997" width="44.85125" height="9.2" fill="#f2f2f2"/><rect x="54.699999999999996" y="293.3" width="5.4" height="5.8" fill="#fff" stroke="#8c8c8c" stroke-width="0.7" rx="0.6"/><rect x="56.6" y="295.9" width="1.4" height="1.4" fill="#aaa"/><rect x="42.5" y="302.16999999999996" width="8.6" height="9.2" fill="#f2f2f2"/><path d="M43.4,306.77 C45.099999999999994,304.27 48.5,304.27 50.199999999999996,306.77 C48.5,309.27 45.099999999999994,309.27 43.4,306.77 Z" fill="#8a8a8a"/><circle cx="46.8" cy="306.77" r="1.05" fill="#f2f2f2"/><circle cx="46.8" cy="306.77" r="0.5" fill="#8a8a8a"/><rect x="52.9" y="302.16999999999996" width="30.976999999999997" height="9.2" fill="#f2f2f2"/><rect x="54.699999999999996" y="303.87" width="5.4" height="5.8" fill="#fff" stroke="#8c8c8c" stroke-width="0.7" rx="0.6"/><rect x="56.6" y="306.46999999999997" width="1.4" height="1.4" fill="#aaa"/><rect x="42.5" y="312.74" width="8.6" height="9.2" fill="#f2f2f2"/><path d="M43.4,317.34000000000003 C45.099999999999994,314.84000000000003 48.5,314.84000000000003 50.199999999999996,317.34000000000003 C48.5,319.84000000000003 45.099999999999994,319.84000000000003 43.4,317.34000000000003 Z" fill="#8a8a8a"/><circle cx="46.8" cy="317.34000000000003" r="1.05" fill="#f2f2f2"/><circle cx="46.8" cy="317.34000000000003" r="0.5" fill="#8a8a8a"/><rect x="52.9" y="312.74" width="30.976999999999997" height="9.2" fill="#f2f2f2"/><rect x="54.699999999999996" y="314.44000000000005" width="5.4" height="5.8" fill="#fff" stroke="#8c8c8c" stroke-width="0.7" rx="0.6"/><rect x="56.6" y="317.04" width="1.4" height="1.4" fill="#aaa"/><rect x="42.5" y="323.31" width="8.6" height="9.2" fill="#f2f2f2"/><path d="M43.4,327.91 C45.099999999999994,325.41 48.5,325.41 50.199999999999996,327.91 C48.5,330.41 45.099999999999994,330.41 43.4,327.91 Z" fill="#8a8a8a"/><circle cx="46.8" cy="327.91" r="1.05" fill="#f2f2f2"/><circle cx="46.8" cy="327.91" r="0.5" fill="#8a8a8a"/><rect x="52.9" y="323.31" width="30.976999999999997" height="9.2" fill="#f2f2f2"/><rect x="54.699999999999996" y="325.01000000000005" width="5.4" height="5.8" fill="#fff" stroke="#8c8c8c" stroke-width="0.7" rx="0.6"/><rect x="56.6" y="327.61" width="1.4" height="1.4" fill="#aaa"/><rect x="42.5" y="333.88" width="8.6" height="9.2" fill="#f2f2f2"/><path d="M43.4,338.48 C45.099999999999994,335.98 48.5,335.98 50.199999999999996,338.48 C48.5,340.98 45.099999999999994,340.98 43.4,338.48 Z" fill="#8a8a8a"/><circle cx="46.8" cy="338.48" r="1.05" fill="#f2f2f2"/><circle cx="46.8" cy="338.48" r="0.5" fill="#8a8a8a"/><rect x="52.9" y="333.88" width="40.841" height="9.2" fill="#f2f2f2"/><rect x="54.699999999999996" y="335.58000000000004" width="5.4" height="5.8" fill="#fff" stroke="#8c8c8c" stroke-width="0.7" rx="0.6"/><rect x="56.6" y="338.18" width="1.4" height="1.4" fill="#aaa"/><rect x="42.5" y="344.45" width="8.6" height="9.2" fill="#f2f2f2"/><path d="M43.4,349.05 C45.099999999999994,346.55 48.5,346.55 50.199999999999996,349.05 C48.5,351.55 45.099999999999994,351.55 43.4,349.05 Z" fill="#8a8a8a"/><circle cx="46.8" cy="349.05" r="1.05" fill="#f2f2f2"/><circle cx="46.8" cy="349.05" r="0.5" fill="#8a8a8a"/><rect x="52.9" y="344.45" width="40.841" height="9.2" fill="#f2f2f2"/><rect x="54.699999999999996" y="346.15000000000003" width="5.4" height="5.8" fill="#fff" stroke="#8c8c8c" stroke-width="0.7" rx="0.6"/><rect x="56.6" y="348.75" width="1.4" height="1.4" fill="#aaa"/><rect x="42.5" y="355.02" width="8.6" height="9.2" fill="#f2f2f2"/><path d="M43.4,359.62 C45.099999999999994,357.12 48.5,357.12 50.199999999999996,359.62 C48.5,362.12 45.099999999999994,362.12 43.4,359.62 Z" fill="#8a8a8a"/><circle cx="46.8" cy="359.62" r="1.05" fill="#f2f2f2"/><circle cx="46.8" cy="359.62" r="0.5" fill="#8a8a8a"/><rect x="52.9" y="355.02" width="40.841" height="9.2" fill="#f2f2f2"/><rect x="54.699999999999996" y="356.72" width="5.4" height="5.8" fill="#fff" stroke="#8c8c8c" stroke-width="0.7" rx="0.6"/><rect x="56.6" y="359.32" width="1.4" height="1.4" fill="#aaa"/><rect x="42.5" y="365.59" width="8.6" height="9.2" fill="#f2f2f2"/><path d="M43.4,370.19 C45.099999999999994,367.69 48.5,367.69 50.199999999999996,370.19 C48.5,372.69 45.099999999999994,372.69 43.4,370.19 Z" fill="#8a8a8a"/><circle cx="46.8" cy="370.19" r="1.05" fill="#f2f2f2"/><circle cx="46.8" cy="370.19" r="0.5" fill="#8a8a8a"/><rect x="52.9" y="365.59" width="47.77400000000001" height="9.2" fill="#f2f2f2"/><rect x="54.699999999999996" y="367.29" width="5.4" height="5.8" fill="#fff" stroke="#8c8c8c" stroke-width="0.7" rx="0.6"/><rect x="56.6" y="369.89" width="1.4" height="1.4" fill="#aaa"/><rect x="42.5" y="376.16" width="8.6" height="9.2" fill="#f2f2f2"/><path d="M43.4,380.76000000000005 C45.099999999999994,378.26000000000005 48.5,378.26000000000005 50.199999999999996,380.76000000000005 C48.5,383.26000000000005 45.099999999999994,383.26000000000005 43.4,380.76000000000005 Z" fill="#8a8a8a"/><circle cx="46.8" cy="380.76000000000005" r="1.05" fill="#f2f2f2"/><circle cx="46.8" cy="380.76000000000005" r="0.5" fill="#8a8a8a"/><rect x="52.9" y="376.16" width="47.77400000000001" height="9.2" fill="#f2f2f2"/><rect x="54.699999999999996" y="377.86000000000007" width="5.4" height="5.8" fill="#fff" stroke="#8c8c8c" stroke-width="0.7" rx="0.6"/><rect x="56.6" y="380.46000000000004" width="1.4" height="1.4" fill="#aaa"/><rect x="42.5" y="386.73" width="8.6" height="9.2" fill="#f2f2f2"/><path d="M43.4,391.33000000000004 C45.099999999999994,388.83000000000004 48.5,388.83000000000004 50.199999999999996,391.33000000000004 C48.5,393.83000000000004 45.099999999999994,393.83000000000004 43.4,391.33000000000004 Z" fill="#8a8a8a"/><circle cx="46.8" cy="391.33000000000004" r="1.05" fill="#f2f2f2"/><circle cx="46.8" cy="391.33000000000004" r="0.5" fill="#8a8a8a"/><rect x="52.9" y="386.73" width="47.77400000000001" height="9.2" fill="#f2f2f2"/><rect x="54.699999999999996" y="388.43000000000006" width="5.4" height="5.8" fill="#fff" stroke="#8c8c8c" stroke-width="0.7" rx="0.6"/><rect x="56.6" y="391.03000000000003" width="1.4" height="1.4" fill="#aaa"/><rect x="42.5" y="397.3" width="8.6" height="9.2" fill="#f2f2f2"/><path d="M43.4,401.90000000000003 C45.099999999999994,399.40000000000003 48.5,399.40000000000003 50.199999999999996,401.90000000000003 C48.5,404.40000000000003 45.099999999999994,404.40000000000003 43.4,401.90000000000003 Z" fill="#8a8a8a"/><circle cx="46.8" cy="401.90000000000003" r="1.05" fill="#f2f2f2"/><circle cx="46.8" cy="401.90000000000003" r="0.5" fill="#8a8a8a"/><rect x="52.9" y="397.3" width="47.77400000000001" height="9.2" fill="#f2f2f2"/><rect x="54.699999999999996" y="399.00000000000006" width="5.4" height="5.8" fill="#fff" stroke="#8c8c8c" stroke-width="0.7" rx="0.6"/><rect x="56.6" y="401.6" width="1.4" height="1.4" fill="#aaa"/><rect x="42.5" y="407.87" width="8.6" height="9.2" fill="#f2f2f2"/><path d="M43.4,412.47 C45.099999999999994,409.97 48.5,409.97 50.199999999999996,412.47 C48.5,414.97 45.099999999999994,414.97 43.4,412.47 Z" fill="#8a8a8a"/><circle cx="46.8" cy="412.47" r="1.05" fill="#f2f2f2"/><circle cx="46.8" cy="412.47" r="0.5" fill="#8a8a8a"/><rect x="52.9" y="407.87" width="47.77400000000001" height="9.2" fill="#f2f2f2"/><rect x="54.699999999999996" y="409.57000000000005" width="5.4" height="5.8" fill="#fff" stroke="#8c8c8c" stroke-width="0.7" rx="0.6"/><rect x="56.6" y="412.17" width="1.4" height="1.4" fill="#aaa"/><rect x="42.5" y="418.44" width="8.6" height="9.2" fill="#f2f2f2"/><path d="M43.4,423.04 C45.099999999999994,420.54 48.5,420.54 50.199999999999996,423.04 C48.5,425.54 45.099999999999994,425.54 43.4,423.04 Z" fill="#8a8a8a"/><circle cx="46.8" cy="423.04" r="1.05" fill="#f2f2f2"/><circle cx="46.8" cy="423.04" r="0.5" fill="#8a8a8a"/><rect x="52.9" y="418.44" width="47.77400000000001" height="9.2" fill="#f2f2f2"/><rect x="54.699999999999996" y="420.14000000000004" width="5.4" height="5.8" fill="#fff" stroke="#8c8c8c" stroke-width="0.7" rx="0.6"/><rect x="56.6" y="422.74" width="1.4" height="1.4" fill="#aaa"/><rect x="42.5" y="429.01" width="8.6" height="9.2" fill="#f2f2f2"/><path d="M43.4,433.61 C45.099999999999994,431.11 48.5,431.11 50.199999999999996,433.61 C48.5,436.11 45.099999999999994,436.11 43.4,433.61 Z" fill="#8a8a8a"/><circle cx="46.8" cy="433.61" r="1.05" fill="#f2f2f2"/><circle cx="46.8" cy="433.61" r="0.5" fill="#8a8a8a"/><rect x="52.9" y="429.01" width="38.71099999999999" height="9.2" fill="#f2f2f2"/><rect x="54.699999999999996" y="430.71000000000004" width="5.4" height="5.8" fill="#fff" stroke="#8c8c8c" stroke-width="0.7" rx="0.6"/><rect x="56.6" y="433.31" width="1.4" height="1.4" fill="#aaa"/><rect x="42.5" y="439.58" width="8.6" height="9.2" fill="#f2f2f2"/><path d="M43.4,444.18 C45.099999999999994,441.68 48.5,441.68 50.199999999999996,444.18 C48.5,446.68 45.099999999999994,446.68 43.4,444.18 Z" fill="#8a8a8a"/><circle cx="46.8" cy="444.18" r="1.05" fill="#f2f2f2"/><circle cx="46.8" cy="444.18" r="0.5" fill="#8a8a8a"/><rect x="52.9" y="439.58" width="38.71099999999999" height="9.2" fill="#f2f2f2"/><rect x="54.699999999999996" y="441.28000000000003" width="5.4" height="5.8" fill="#fff" stroke="#8c8c8c" stroke-width="0.7" rx="0.6"/><rect x="56.6" y="443.88" width="1.4" height="1.4" fill="#aaa"/><rect x="42.5" y="450.15" width="8.6" height="9.2" fill="#f2f2f2"/><path d="M43.4,454.75 C45.099999999999994,452.25 48.5,452.25 50.199999999999996,454.75 C48.5,457.25 45.099999999999994,457.25 43.4,454.75 Z" fill="#8a8a8a"/><circle cx="46.8" cy="454.75" r="1.05" fill="#f2f2f2"/><circle cx="46.8" cy="454.75" r="0.5" fill="#8a8a8a"/><rect x="52.9" y="450.15" width="37.6445" height="9.2" fill="#f2f2f2"/><rect x="54.699999999999996" y="451.85" width="5.4" height="5.8" fill="#fff" stroke="#8c8c8c" stroke-width="0.7" rx="0.6"/><rect x="56.6" y="454.45" width="1.4" height="1.4" fill="#aaa"/><rect x="42.5" y="460.71999999999997" width="8.6" height="9.2" fill="#f2f2f2"/><path d="M43.4,465.32 C45.099999999999994,462.82 48.5,462.82 50.199999999999996,465.32 C48.5,467.82 45.099999999999994,467.82 43.4,465.32 Z" fill="#8a8a8a"/><circle cx="46.8" cy="465.32" r="1.05" fill="#f2f2f2"/><circle cx="46.8" cy="465.32" r="0.5" fill="#8a8a8a"/><rect x="52.9" y="460.71999999999997" width="37.6445" height="9.2" fill="#f2f2f2"/><rect x="54.699999999999996" y="462.42" width="5.4" height="5.8" fill="#fff" stroke="#8c8c8c" stroke-width="0.7" rx="0.6"/><rect x="56.6" y="465.02" width="1.4" height="1.4" fill="#aaa"/><rect x="42.5" y="471.29" width="8.6" height="9.2" fill="#f2f2f2"/><path d="M43.4,475.89000000000004 C45.099999999999994,473.39000000000004 48.5,473.39000000000004 50.199999999999996,475.89000000000004 C48.5,478.39000000000004 45.099999999999994,478.39000000000004 43.4,475.89000000000004 Z" fill="#8a8a8a"/><circle cx="46.8" cy="475.89000000000004" r="1.05" fill="#f2f2f2"/><circle cx="46.8" cy="475.89000000000004" r="0.5" fill="#8a8a8a"/><rect x="52.9" y="471.29" width="37.6445" height="9.2" fill="#f2f2f2"/><rect x="54.699999999999996" y="472.99000000000007" width="5.4" height="5.8" fill="#fff" stroke="#8c8c8c" stroke-width="0.7" rx="0.6"/><rect x="56.6" y="475.59000000000003" width="1.4" height="1.4" fill="#aaa"/><rect x="42.5" y="481.86" width="8.6" height="9.2" fill="#f2f2f2"/><path d="M43.4,486.46000000000004 C45.099999999999994,483.96000000000004 48.5,483.96000000000004 50.199999999999996,486.46000000000004 C48.5,488.96000000000004 45.099999999999994,488.96000000000004 43.4,486.46000000000004 Z" fill="#8a8a8a"/><circle cx="46.8" cy="486.46000000000004" r="1.05" fill="#f2f2f2"/><circle cx="46.8" cy="486.46000000000004" r="0.5" fill="#8a8a8a"/><rect x="52.9" y="481.86" width="37.6445" height="9.2" fill="#f2f2f2"/><rect x="54.699999999999996" y="483.56000000000006" width="5.4" height="5.8" fill="#fff" stroke="#8c8c8c" stroke-width="0.7" rx="0.6"/><rect x="56.6" y="486.16" width="1.4" height="1.4" fill="#aaa"/><rect x="42.5" y="492.43" width="8.6" height="9.2" fill="#f2f2f2"/><path d="M43.4,497.03000000000003 C45.099999999999994,494.53000000000003 48.5,494.53000000000003 50.199999999999996,497.03000000000003 C48.5,499.53000000000003 45.099999999999994,499.53000000000003 43.4,497.03000000000003 Z" fill="#8a8a8a"/><circle cx="46.8" cy="497.03000000000003" r="1.05" fill="#f2f2f2"/><circle cx="46.8" cy="497.03000000000003" r="0.5" fill="#8a8a8a"/><rect x="52.9" y="492.43" width="37.6445" height="9.2" fill="#f2f2f2"/><rect x="54.699999999999996" y="494.13000000000005" width="5.4" height="5.8" fill="#fff" stroke="#8c8c8c" stroke-width="0.7" rx="0.6"/><rect x="56.6" y="496.73" width="1.4" height="1.4" fill="#aaa"/><path d="M26.2,505.1 L30.0,507.6 L26.2,510.1 Z" fill="#fff" stroke="#666" stroke-width="0.8" stroke-linejoin="round"/><rect x="34.300000000000004" y="503.0" width="8.6" height="9.2" fill="#f2f2f2"/><path d="M35.2,507.6 C36.9,505.1 40.300000000000004,505.1 42.0,507.6 C40.300000000000004,510.1 36.9,510.1 35.2,507.6 Z" fill="#8a8a8a"/><circle cx="38.6" cy="507.6" r="1.05" fill="#f2f2f2"/><circle cx="38.6" cy="507.6" r="0.5" fill="#8a8a8a"/><rect x="44.7" y="503.0" width="37.643" height="9.2" fill="#f2f2f2"/><path d="M45.7,504.8 L48.400000000000006,504.8 L49.400000000000006,505.70000000000005 L52.7,505.70000000000005 L52.7,510.3 L45.7,510.3 Z" fill="#7c7c7c"/><rect x="45.7" y="506.5" width="7" height="0.6" fill="#b8b8b8"/></svg>
<div class="t" style="left:38.6px;top:82.7px;font-size:4.8px;color:#666;">Document Settings</div>
<div class="t" style="left:40.4px;top:93.27000000000001px;font-size:4.8px;color:#666;">Named Views</div>
<div class="t" style="left:52px;top:103.84px;font-size:4.8px;color:#666;">Origin</div>
<div class="t" style="left:52px;top:114.41px;font-size:4.8px;color:#666;">Analysis</div>
<div class="t" style="left:52px;top:124.98px;font-size:4.8px;color:#666;">Sketches</div>
<div class="t" style="left:52px;top:135.55px;font-size:4.8px;color:#666;">Construction</div>
<div class="t" style="left:52px;top:146.12px;font-size:4.8px;color:#666;">Platform_Main_First:1</div>
<div class="t" style="left:52px;top:156.69000000000003px;font-size:4.8px;color:#666;">Platform_Main_Second:1</div>
<div class="t" style="left:52px;top:167.26000000000002px;font-size:4.8px;color:#666;">Transportation_Mechanism:1</div>
<div class="t" style="left:52px;top:177.83px;font-size:4.8px;color:#666;">Product_Samples:1</div>
<div class="t" style="left:59.6px;top:188.4px;font-size:4.8px;color:#666;">Origin</div>
<div class="t" style="left:59.6px;top:198.97px;font-size:4.8px;color:#666;">Bodies</div>
<div class="t" style="left:67.8px;top:209.54px;font-size:4.8px;color:#666;">basketball_1</div>
<div class="t" style="left:67.8px;top:220.10999999999999px;font-size:4.8px;color:#666;">basketball_2</div>
<div class="t" style="left:67.8px;top:230.68000000000004px;font-size:4.8px;color:#666;">basketball_3</div>
<div class="t" style="left:67.8px;top:241.25000000000003px;font-size:4.8px;color:#666;">basketball_4</div>
<div class="t" style="left:67.8px;top:251.82000000000002px;font-size:4.8px;color:#666;">basketball_5</div>
<div class="t" style="left:67.8px;top:262.39px;font-size:4.8px;color:#666;">basketball_6</div>
<div class="t" style="left:67.8px;top:272.96px;font-size:4.8px;color:#666;">basketball_7</div>
<div class="t" style="left:67.8px;top:283.53px;font-size:4.8px;color:#666;">basketball_8</div>
<div class="t" style="left:67.8px;top:294.09999999999997px;font-size:4.8px;color:#666;">basketball_9</div>
<div class="t" style="left:67.8px;top:304.66999999999996px;font-size:4.8px;color:#666;">cup_1</div>
<div class="t" style="left:67.8px;top:315.24px;font-size:4.8px;color:#666;">cup_2</div>
<div class="t" style="left:67.8px;top:325.81px;font-size:4.8px;color:#666;">cup_3</div>
<div class="t" style="left:67.8px;top:336.38px;font-size:4.8px;color:#666;">hammer_1</div>
<div class="t" style="left:67.8px;top:346.95px;font-size:4.8px;color:#666;">hammer_2</div>
<div class="t" style="left:67.8px;top:357.52px;font-size:4.8px;color:#666;">hammer_3</div>
<div class="t" style="left:67.8px;top:368.09px;font-size:4.8px;color:#666;">screwdriver_1</div>
<div class="t" style="left:67.8px;top:378.66px;font-size:4.8px;color:#666;">screwdriver_2</div>
<div class="t" style="left:67.8px;top:389.23px;font-size:4.8px;color:#666;">screwdriver_3</div>
<div class="t" style="left:67.8px;top:399.8px;font-size:4.8px;color:#666;">screwdriver_4</div>
<div class="t" style="left:67.8px;top:410.37px;font-size:4.8px;color:#666;">screwdriver_5</div>
<div class="t" style="left:67.8px;top:420.94px;font-size:4.8px;color:#666;">screwdriver_6</div>
<div class="t" style="left:67.8px;top:431.51px;font-size:4.8px;color:#666;">wrench_1</div>
<div class="t" style="left:67.8px;top:442.08px;font-size:4.8px;color:#666;">wrench_2</div>
<div class="t" style="left:67.8px;top:452.65px;font-size:4.8px;color:#666;">mouse_1</div>
<div class="t" style="left:67.8px;top:463.21999999999997px;font-size:4.8px;color:#666;">mouse_2</div>
<div class="t" style="left:67.8px;top:473.79px;font-size:4.8px;color:#666;">mouse_3</div>
<div class="t" style="left:67.8px;top:484.36px;font-size:4.8px;color:#666;">mouse_4</div>
<div class="t" style="left:67.8px;top:494.93px;font-size:4.8px;color:#666;">mouse_5</div>
<div class="t" style="left:59.6px;top:505.5px;font-size:4.8px;color:#666;">Sketches</div>
<svg class="ab" style="left:0;top:0" width="634" height="555" viewBox="0 0 634 555"><circle cx="382.4" cy="138.4" r="65.25" fill="#e0dacd" stroke="#8c8882" stroke-width="0.85"/><circle cx="522" cy="209.7" r="65.25" fill="#e0dacd" stroke="#8c8882" stroke-width="0.85"/><circle cx="250.6" cy="224" r="65.25" fill="#e0dacd" stroke="#8c8882" stroke-width="0.85"/><circle cx="258.1" cy="380" r="65.25" fill="#e0dacd" stroke="#8c8882" stroke-width="0.85"/><circle cx="530" cy="366.8" r="65.25" fill="#e0dacd" stroke="#8c8882" stroke-width="0.85"/><circle cx="397.5" cy="451.8" r="65.25" fill="#e0dacd" stroke="#8c8882" stroke-width="0.85"/><path d="M416.3,90.8 C404,89 394.5,94 391.8,103 C389.8,110 390.8,115.5 391,118.8 L342.5,161 C336.5,166 335.8,176.5 341,181.5 C346,185.8 353.5,184.8 358.5,179.8 L404,132 C413,131 424,127 429.5,119.5 C433,114 433,109 431.3,104.3 L418.3,116.5 L409.3,114.5 L405,106.5 Z" fill="#cdc4bc" stroke="#5a524d" stroke-width="1.1" stroke-linejoin="round"/><circle cx="348.8" cy="172.4" r="7.2" fill="none" stroke="#d8d1c8" stroke-width="1.2"/><circle cx="348.8" cy="172.4" r="5.9" fill="#d9d3ca" stroke="#5a524d" stroke-width="1.1"/><path d="M485.7,196.1 L520.5,196.1 L520.5,158.9 C500,159.5 485.7,176 485.7,196.1 Z" fill="#55b2df" stroke="#2f5565" stroke-width="1.1"/><path d="M559.8,196.1 L525.4,196.1 L525.4,158.9 C546,159.5 559.8,176 559.8,196.1 Z" fill="#55b2df" stroke="#2f5565" stroke-width="1.1"/><path d="M485.7,200.8 L559.8,200.8 L559.8,231 C559.8,253 543,265.6 522.7,265.6 C502.5,265.6 485.7,253 485.7,231 Z" fill="#55b2df" stroke="#2f5565" stroke-width="1.1"/><path d="M520.5,158 L525.4,158 L525.4,165.5 C529,166.5 531.5,170 531.5,174 L531.5,182 C531.5,186 529,189 525.4,190.3 L525.4,197 L520.5,197 L520.5,190.3 C516.8,189 514.2,186 514.2,182 L514.2,174 C514.2,170 516.8,166.5 520.5,165.5 Z" fill="#e0dacd" stroke="#2f5565" stroke-width="1.1"/><rect x="519" y="155" width="8" height="3.5" fill="#e0dacd"/><rect x="519.9" y="195.6" width="6.1" height="4.6" fill="#e0dacd"/><ellipse cx="523" cy="178" rx="5.2" ry="7.4" fill="#55b2df" stroke="#2f5565" stroke-width="1.1"/><g transform="translate(212.2,259.2) rotate(-44.2)"><path d="M57,-1.9 L93.5,-1.9 L97.8,-4.4 L110.6,-1.4 L111.2,0.9 L98.6,4.3 L93.5,1.9 L57,1.9 Z" fill="#e2dcd0" stroke="#5e4f4a" stroke-width="1" stroke-linejoin="round"/><rect x="47.3" y="-8.4" width="7.3" height="16.8" rx="0.8" fill="#a23d3a" stroke="#4d3b37" stroke-width="1"/><path d="M0.5,-6.6 Q0,-8.3 1.6,-8.3 L28.5,-8.3 C31,-8.3 32,-8.6 34.5,-8.4 C37.5,-8 38.8,-5.5 42,-5.5 C43.8,-5.5 44.5,-6.6 45.6,-6.6 L45.6,6.6 C44.5,6.6 43.8,5.5 42,5.5 C38.8,5.5 37.5,8 34.5,8.4 C32,8.6 31,8.3 28.5,8.3 L1.6,8.3 Q0,8.3 0.5,6.6 Z" fill="#a23d3a" stroke="#4d3b37" stroke-width="1" stroke-linejoin="round"/><path d="M3,-8.8 C4.3,-5.8 5.5,-5 8,-5 L25.5,-5 C28,-5 29.2,-5.8 30.8,-8.8" fill="none" stroke="#4d3b37" stroke-width="2.7"/><path d="M3,-8.8 C4.3,-5.8 5.5,-5 8,-5 L25.5,-5 C28,-5 29.2,-5.8 30.8,-8.8" fill="none" stroke="#e2dcd0" stroke-width="1.5"/><path d="M8.5,-7 L25,-7" fill="none" stroke="#8a3230" stroke-width="1.2"/><path d="M3,8.8 C4.3,5.8 5.5,5 8,5 L25.5,5 C28,5 29.2,5.8 30.8,8.8" fill="none" stroke="#4d3b37" stroke-width="2.7"/><path d="M3,8.8 C4.3,5.8 5.5,5 8,5 L25.5,5 C28,5 29.2,5.8 30.8,8.8" fill="none" stroke="#e2dcd0" stroke-width="1.5"/><path d="M8.5,7 L25,7" fill="none" stroke="#8a3230" stroke-width="1.2"/></g><path d="M209.5,412 C208.5,413 208.5,415 209.5,416 L215.5,421.5 C216.5,422.5 218,422.5 219,421.5 L282.2,360 L272.4,352.4 Z" fill="#d6975a" stroke="#4e3a2a" stroke-width="1.1" stroke-linejoin="round"/><path d="M256.6,333 C262,330 270,329 280,329.7 C288,330.5 296,337 300.8,344.1 C302.5,346.5 303,348 305,350.5 L313,357 C314.5,358.5 314.5,360 313.5,361.5 L308.5,366 C307.5,366.8 305.5,366.5 304.5,365.5 C302.5,362 299.5,357.5 296.4,355.5 C293,353.5 289,355 285.3,358.4 L275.4,349 C278,346 281,342.5 280,340 C278,336.5 272,334.5 266,334 C262,333.8 259,333.8 256.6,333 Z" fill="#d6975a" stroke="#4e3a2a" stroke-width="1.1" stroke-linejoin="round"/><circle cx="530.1" cy="368.5" r="49.6" fill="#f77b5f" stroke="#6b3b2c" stroke-width="1.1"/><path d="M494.8,333.8 C515,347 545,370 567.2,400.2" fill="none" stroke="#6b3b2c" stroke-width="4.5"/><path d="M490.9,398.5 C491.5,382 498,366 507,357 C516,347 530,336 556,326" fill="none" stroke="#6b3b2c" stroke-width="4.5"/><path d="M519,319.5 C516.5,328 518,336 526,340.5 C540,346 562,352 579.5,357.5" fill="none" stroke="#6b3b2c" stroke-width="4.5"/><path d="M481,358 C490,353 503,353 510,360.5 C517,369 521,393 527,418" fill="none" stroke="#6b3b2c" stroke-width="4.5"/><path d="M494.8,333.8 C515,347 545,370 567.2,400.2" fill="none" stroke="#e0dacd" stroke-width="2.4"/><path d="M490.9,398.5 C491.5,382 498,366 507,357 C516,347 530,336 556,326" fill="none" stroke="#e0dacd" stroke-width="2.4"/><path d="M519,319.5 C516.5,328 518,336 526,340.5 C540,346 562,352 579.5,357.5" fill="none" stroke="#e0dacd" stroke-width="2.4"/><path d="M481,358 C490,353 503,353 510,360.5 C517,369 521,393 527,418" fill="none" stroke="#e0dacd" stroke-width="2.4"/><path d="M354.5,413.6 L438.5,413.6 L437.5,420.4 C443,420.5 449,424 451.5,429 C454,435 453,443 448,450 C444,455 437,458 426.5,460.5 L421.1,471.6 L371.9,471.6 C363,460 357,440 354.5,413.6 Z M437.5,425.5 C442,425.6 446,428 447.5,432.5 C448.5,437 446.5,443 441.5,447 C438,449.5 434,450.5 429.3,451.1 Z" fill="#92d51c" stroke="#3e5a1c" stroke-width="1.1" stroke-linejoin="round" fill-rule="evenodd"/><path d="M341.2,474.7 L453.9,474.7 C451,479 447,484 441.6,485 L355.5,485 C350,484 345,479 341.2,474.7 Z" fill="#92d51c" stroke="#3e5a1c" stroke-width="1.1" stroke-linejoin="round"/></svg>
<div class="ab" style="left:594px;top:81.2px;width:23.6px;height:23.4px;background:#eeeeee;border:0.8px solid #c2c2c2"></div>
<div class="t" style="left:555.8px;width:100px;text-align:center;top:90.2px;font-size:5.6px;color:#6a6a6a;">TOP</div>
<svg class="ab" style="left:588px;top:72px" width="40" height="40"><path d="M6.5,9 L6.5,6.5" stroke="#9d9" stroke-width="0.6"/><path d="M29.5,32 L31,32" stroke="#eaa" stroke-width="0.6"/><path d="M6,32 L4.5,34" stroke="#77e" stroke-width="0.7"/><text x="6.8" y="7" font-size="3.6" fill="#8c8" font-family="Liberation Sans">Y</text><text x="31.5" y="31.5" font-size="3.6" fill="#e99" font-family="Liberation Sans">X</text><text x="3.5" y="35.5" font-size="3.6" fill="#66d" font-family="Liberation Sans">Z</text></svg>
<svg class="ab" style="left:260px;top:518px" width="112" height="14" viewBox="260 518 112 14"><rect x="264" y="519.5" width="106" height="10.5" rx="1.5" fill="#f3f3f3"/><path d="M266.5,524.7 L272.5,524.7 M269.5,521.7 L269.5,527.7" stroke="#9a9a9a" stroke-width="1"/><circle cx="269.5" cy="524.7" r="1.5" fill="#aaa"/><path d="M275.6,524.2 L277.4,524.2 L276.5,525.3000000000001 Z" fill="#777"/><path d="M324.8,524.2 L326.59999999999997,524.2 L325.7,525.3000000000001 Z" fill="#777"/><path d="M338.1,524.2 L339.9,524.2 L339,525.3000000000001 Z" fill="#777"/><path d="M351.5,524.2 L353.29999999999995,524.2 L352.4,525.3000000000001 Z" fill="#777"/><path d="M365.1,524.2 L366.9,524.2 L366,525.3000000000001 Z" fill="#777"/><rect x="280.5" y="523.2" width="6.5" height="4" fill="#b0b0b0"/><path d="M281.5,523.2 L283.7,521.2 L286,523.2" fill="#aaa"/><rect x="291.5" y="520.2" width="11" height="9.4" fill="#3a8ad8"/><path d="M295,528 L295,523.5 C295,522.8 296.2,522.8 296.2,523.5 L296.2,522 C296.2,521.3 297.4,521.3 297.4,522 L297.4,522.5 C297.4,521.8 298.6,521.8 298.6,522.5 L298.6,523.2 C298.6,522.6 299.8,522.6 299.8,523.2 L299.8,526.5 C299.8,528 298.6,528.8 297.5,528.8 Z" fill="#fff"/><path d="M304.5,521.5 L310,521.5 L310,527 M304.5,521.5 L304.5,524" stroke="#999" stroke-width="0.6" fill="none" stroke-dasharray="0.8 0.5"/><path d="M307.5,523.5 L311,527.5" stroke="#555" stroke-width="0.8"/><circle cx="317.8" cy="523.9000000000001" r="2.6" fill="none" stroke="#888" stroke-width="0.8"/><path d="M319.6,525.7 L321.8,527.9000000000001" stroke="#777" stroke-width="1.1"/><rect x="329" y="521.2" width="7" height="5.5" fill="#6a9fd4"/><rect x="331.5" y="526.7" width="2" height="1.5" fill="#666"/><rect x="342.5" y="521.2" width="7" height="7" fill="#b0b0b0"/><rect x="356" y="521.2" width="7" height="7" fill="#6a9fd4"/><path d="M359.5,521.2 L359.5,528.2 M356,524.7 L363,524.7" stroke="#cfe3f6" stroke-width="0.6"/></svg>
<div class="ab" style="left:2px;top:520px;width:133px;height:11px;background:#efefef;border:0.8px solid #e2e2e2"></div>
<div class="t" style="left:13.5px;top:523.2px;font-size:4.4px;color:#888;">COMMENTS</div>
<svg class="ab" style="left:120px;top:520px" width="14" height="11"><circle cx="7" cy="5.5" r="2.4" fill="#444"/><path d="M5.8,5.5 L8.2,5.5 M7,4.3 L7,6.7" stroke="#eee" stroke-width="0.6"/></svg>
<div class="ab" style="left:0;top:532px;width:634px;height:22px;background:#f4f4f4;border-top:0.8px solid #e0e0e0"></div>
<svg class="ab" style="left:0;top:532px" width="634" height="22" viewBox="0 532 634 22"><path d="M4.8,542.2 L4.8,547.8" stroke="#333" stroke-width="0.8"/><path d="M9.5,542.2 L5.5,545 L9.5,547.8 Z" fill="#333"/><path d="M20.5,542.7 L16.8,545 L20.5,547.3 Z" fill="#333"/><path d="M21,545 L22,545" stroke="#333" stroke-width="0.6"/><path d="M27.6,541.8 L32,545 L27.6,548.2 Z" fill="#333"/><path d="M38.3,542.7 L42,545 L38.3,547.3 Z" fill="#333"/><path d="M37,545 L38,545" stroke="#333" stroke-width="0.6"/><path d="M54,542.2 L54,547.8" stroke="#333" stroke-width="0.8"/><path d="M49.3,542.2 L53.3,545 L49.3,547.8 Z" fill="#333"/><text x="3" y="535.8" font-size="2.8" fill="#aaa" font-family="Liberation Sans">Steps</text><rect x="64.6" y="540.0999999999999" width="6" height="6.4" fill="#f2f2f2" stroke="#aaa" stroke-width="0.5"/><path d="M66.6,546.3 L70.6,542.3" stroke="#e8a040" stroke-width="0.8"/><path d="M75.2,540.8 L76.2,539.8 L81.2,539.8 L81.2,545.8 L80.2,546.8 L75.2,546.8 Z" fill="#4a96dc"/><path d="M75.2,540.8 L76.2,539.8 L81.2,539.8 L80.2,540.8Z" fill="#9bcaf2"/><rect x="86" y="540.0999999999999" width="6" height="6.4" fill="#f2f2f2" stroke="#aaa" stroke-width="0.5"/><path d="M88,546.3 L92,542.3" stroke="#e8a040" stroke-width="0.8"/><rect x="96.2" y="540.0999999999999" width="6" height="6.4" fill="#f2f2f2" stroke="#aaa" stroke-width="0.5"/><path d="M98.2,546.3 L102.2,542.3" stroke="#e8a040" stroke-width="0.8"/><path d="M106.3,540.8 L107.3,539.8 L112.3,539.8 L112.3,545.8 L111.3,546.8 L106.3,546.8 Z" fill="#4a96dc"/><path d="M106.3,540.8 L107.3,539.8 L112.3,539.8 L111.3,540.8Z" fill="#9bcaf2"/><rect x="116.4" y="540.0999999999999" width="6" height="6.4" fill="#f2f2f2" stroke="#aaa" stroke-width="0.5"/><path d="M118.4,546.3 L122.4,542.3" stroke="#e8a040" stroke-width="0.8"/><path d="M127.30000000000001,540.8 L128.3,539.8 L133.3,539.8 L133.3,545.8 L132.3,546.8 L127.30000000000001,546.8 Z" fill="#4a96dc"/><path d="M127.30000000000001,540.8 L128.3,539.8 L133.3,539.8 L132.3,540.8Z" fill="#9bcaf2"/><rect x="139.1" y="540.0999999999999" width="6" height="6.4" fill="#ddd" stroke="#aaa" stroke-width="0.5"/><circle cx="142.1" cy="543.3" r="1.8" fill="#9bc"/><circle cx="152.2" cy="543.3" r="2.5" fill="none" stroke="#6aa0d8" stroke-width="0.9" stroke-dasharray="1 0.8"/><rect x="159.3" y="540.0999999999999" width="6" height="6.4" fill="#f2f2f2" stroke="#aaa" stroke-width="0.5"/><path d="M161.3,546.3 L165.3,542.3" stroke="#e8a040" stroke-width="0.8"/><path d="M170.89999999999998,539.8 L170.89999999999998,546.8" stroke="#777" stroke-width="0.5"/><rect x="171.2" y="539.8" width="3.5" height="3" fill="#4a96dc"/><rect x="175.2" y="542.3" width="1.5" height="4.5" fill="#cfe2f3"/><path d="M180.8,540.8 L181.8,539.8 L186.8,539.8 L186.8,545.8 L185.8,546.8 L180.8,546.8 Z" fill="#4a96dc"/><path d="M180.8,540.8 L181.8,539.8 L186.8,539.8 L185.8,540.8Z" fill="#9bcaf2"/><rect x="190.9" y="540.0999999999999" width="6" height="6.4" fill="#f2f2f2" stroke="#aaa" stroke-width="0.5"/><path d="M192.9,546.3 L196.9,542.3" stroke="#e8a040" stroke-width="0.8"/><path d="M202.2,540.8 L203.2,539.8 L208.2,539.8 L208.2,545.8 L207.2,546.8 L202.2,546.8 Z" fill="#4a96dc"/><path d="M202.2,540.8 L203.2,539.8 L208.2,539.8 L207.2,540.8Z" fill="#9bcaf2"/><path d="M212,540.8 L213,539.8 L218,539.8 L218,545.8 L217,546.8 L212,546.8 Z" fill="#4a96dc"/><path d="M212,540.8 L213,539.8 L218,539.8 L217,540.8Z" fill="#9bcaf2"/><path d="M221.9,541.8 L224.4,539.8 L224.4,546.3 L221.9,546.8Z" fill="#3db05a"/><path d="M225.20000000000002,540.8 L227.9,539.8 L227.9,545.8 L225.20000000000002,546.8Z" fill="#f09040"/><rect x="233.5" y="540.0999999999999" width="6" height="6.4" fill="#f2f2f2" stroke="#aaa" stroke-width="0.5"/><path d="M235.5,546.3 L239.5,542.3" stroke="#e8a040" stroke-width="0.8"/><rect x="244.1" y="540.0999999999999" width="6" height="6.4" fill="#e8e8e8" stroke="#aaa" stroke-width="0.5"/><circle cx="247.6" cy="542.8" r="2" fill="none" stroke="#e8a040" stroke-width="0.7"/><circle cx="255.8" cy="543.3" r="0.85" fill="none" stroke="#777" stroke-width="0.5"/><circle cx="258.0" cy="543.3" r="0.85" fill="none" stroke="#777" stroke-width="0.5"/><circle cx="260.2" cy="543.3" r="0.85" fill="none" stroke="#777" stroke-width="0.5"/><path d="M266.5,545.3 C266.5,540.8 271.5,540.8 271.5,545.3" fill="#e0e0e0" stroke="#999" stroke-width="0.6"/><circle cx="269" cy="543.3" r="0.9" fill="#888"/><path d="M276.8,539.8 L276.8,546.8" stroke="#777" stroke-width="0.5"/><rect x="277.1" y="539.8" width="3.5" height="3" fill="#4a96dc"/><rect x="281.1" y="542.3" width="1.5" height="4.5" fill="#cfe2f3"/><circle cx="287.3" cy="543.3" r="0.85" fill="none" stroke="#777" stroke-width="0.5"/><circle cx="289.5" cy="543.3" r="0.85" fill="none" stroke="#777" stroke-width="0.5"/><circle cx="291.7" cy="543.3" r="0.85" fill="none" stroke="#777" stroke-width="0.5"/><path d="M297.5,545.3 C297.5,540.8 302.5,540.8 302.5,545.3" fill="#e0e0e0" stroke="#999" stroke-width="0.6"/><circle cx="300" cy="543.3" r="0.9" fill="#888"/><circle cx="308.8" cy="543.3" r="0.85" fill="none" stroke="#777" stroke-width="0.5"/><circle cx="311.0" cy="543.3" r="0.85" fill="none" stroke="#777" stroke-width="0.5"/><circle cx="313.2" cy="543.3" r="0.85" fill="none" stroke="#777" stroke-width="0.5"/><path d="M319.5,545.3 C319.5,540.8 324.5,540.8 324.5,545.3" fill="#e0e0e0" stroke="#999" stroke-width="0.6"/><circle cx="322" cy="543.3" r="0.9" fill="#888"/><circle cx="330.40000000000003" cy="543.3" r="0.85" fill="none" stroke="#777" stroke-width="0.5"/><circle cx="332.6" cy="543.3" r="0.85" fill="none" stroke="#777" stroke-width="0.5"/><circle cx="334.8" cy="543.3" r="0.85" fill="none" stroke="#777" stroke-width="0.5"/><path d="M340.0,545.3 C340.0,540.8 345.0,540.8 345.0,545.3" fill="#e0e0e0" stroke="#999" stroke-width="0.6"/><circle cx="342.5" cy="543.3" r="0.9" fill="#888"/><path d="M353.1,540.0 L353.1,546.5999999999999 M349.8,543.3 L356.40000000000003,543.3" stroke="#333" stroke-width="0.7"/><rect x="360" y="540.0999999999999" width="6" height="6.4" fill="#e8e8e8" stroke="#aaa" stroke-width="0.5"/><circle cx="363.5" cy="542.8" r="2" fill="none" stroke="#e8a040" stroke-width="0.7"/><path d="M371.2,539.8 L371.2,546.8" stroke="#777" stroke-width="0.5"/><rect x="371.5" y="539.8" width="3.5" height="3" fill="#4a96dc"/><rect x="375.5" y="542.3" width="1.5" height="4.5" fill="#cfe2f3"/><path d="M382.4,545.3 C382.4,540.8 387.4,540.8 387.4,545.3" fill="#e0e0e0" stroke="#999" stroke-width="0.6"/><circle cx="384.9" cy="543.3" r="0.9" fill="#888"/><path d="M393.0,545.3 C393.0,540.8 398.0,540.8 398.0,545.3" fill="#e0e0e0" stroke="#999" stroke-width="0.6"/><circle cx="395.5" cy="543.3" r="0.9" fill="#888"/><path d="M404.5,545.3 C404.5,540.8 409.5,540.8 409.5,545.3" fill="#e0e0e0" stroke="#999" stroke-width="0.6"/><circle cx="407" cy="543.3" r="0.9" fill="#888"/><path d="M414,545.3 L418,540.3 L420,541.8 L416,546.3Z" fill="#4ab040"/><path d="M425.8,541.8 L428.3,539.8 L428.3,546.3 L425.8,546.8Z" fill="#3db05a"/><path d="M429.1,540.8 L431.8,539.8 L431.8,545.8 L429.1,546.8Z" fill="#f09040"/><rect x="435.5" y="540.0999999999999" width="6" height="6.4" fill="#f2f2f2" stroke="#aaa" stroke-width="0.5"/><path d="M437.5,546.3 L441.5,542.3" stroke="#e8a040" stroke-width="0.8"/><rect x="445.9" y="540.3" width="6" height="6" fill="#cfe2f3"/><path d="M445.9,544.3 L451.9,544.3" stroke="#4a96dc" stroke-width="1.5"/><circle cx="456.7" cy="543.3" r="0.85" fill="none" stroke="#777" stroke-width="0.5"/><circle cx="458.9" cy="543.3" r="0.85" fill="none" stroke="#777" stroke-width="0.5"/><circle cx="461.09999999999997" cy="543.3" r="0.85" fill="none" stroke="#777" stroke-width="0.5"/><path d="M467.1,545.3 C467.1,540.8 472.1,540.8 472.1,545.3" fill="#e0e0e0" stroke="#999" stroke-width="0.6"/><circle cx="469.6" cy="543.3" r="0.9" fill="#888"/><circle cx="478.40000000000003" cy="543.3" r="0.85" fill="none" stroke="#777" stroke-width="0.5"/><circle cx="480.6" cy="543.3" r="0.85" fill="none" stroke="#777" stroke-width="0.5"/><circle cx="482.8" cy="543.3" r="0.85" fill="none" stroke="#777" stroke-width="0.5"/><path d="M488.5,545.3 C488.5,540.8 493.5,540.8 493.5,545.3" fill="#e0e0e0" stroke="#999" stroke-width="0.6"/><circle cx="491" cy="543.3" r="0.9" fill="#888"/><path d="M498.59999999999997,539.8 L498.59999999999997,546.8" stroke="#777" stroke-width="0.5"/><rect x="498.9" y="539.8" width="3.5" height="3" fill="#4a96dc"/><rect x="502.9" y="542.3" width="1.5" height="4.5" fill="#cfe2f3"/><rect x="509.4" y="540.0999999999999" width="6" height="6.4" fill="#f2f2f2" stroke="#aaa" stroke-width="0.5"/><path d="M511.4,546.3 L515.4,542.3" stroke="#e8a040" stroke-width="0.8"/><path d="M519.8,540.8 L520.8,539.8 L525.8,539.8 L525.8,545.8 L524.8,546.8 L519.8,546.8 Z" fill="#4a96dc"/><path d="M519.8,540.8 L520.8,539.8 L525.8,539.8 L524.8,540.8Z" fill="#9bcaf2"/><rect x="530" y="540.0999999999999" width="6" height="6.4" fill="#f2f2f2" stroke="#aaa" stroke-width="0.5"/><path d="M532,546.3 L536,542.3" stroke="#e8a040" stroke-width="0.8"/><path d="M540.5,540.8 L541.5,539.8 L546.5,539.8 L546.5,545.8 L545.5,546.8 L540.5,546.8 Z" fill="#4a96dc"/><path d="M540.5,540.8 L541.5,539.8 L546.5,539.8 L545.5,540.8Z" fill="#9bcaf2"/><rect x="550.9" y="540.0999999999999" width="6" height="6.4" fill="#d0d0d0" stroke="#888" stroke-width="0.5"/><path d="M550.9,543.3 L556.9,543.3 M553.9,540.0999999999999 L553.9,546.5" stroke="#888" stroke-width="0.4"/><path d="M561.4000000000001,539.8 L561.4000000000001,546.8" stroke="#777" stroke-width="0.5"/><rect x="561.7" y="539.8" width="3.5" height="3" fill="#4a96dc"/><rect x="565.7" y="542.3" width="1.5" height="4.5" fill="#cfe2f3"/><path d="M571.6,540.8 L572.6,539.8 L577.6,539.8 L577.6,545.8 L576.6,546.8 L571.6,546.8 Z" fill="#4a96dc"/><path d="M571.6,540.8 L572.6,539.8 L577.6,539.8 L576.6,540.8Z" fill="#9bcaf2"/><path d="M582,540.8 L583,539.8 L588,539.8 L588,545.8 L587,546.8 L582,546.8 Z" fill="#4a96dc"/><path d="M582,540.8 L583,539.8 L588,539.8 L587,540.8Z" fill="#9bcaf2"/><path d="M593.5,539.8 L593.5,546.8" stroke="#777" stroke-width="0.5"/><rect x="593.8" y="539.8" width="3.5" height="3" fill="#4a96dc"/><rect x="597.8" y="542.3" width="1.5" height="4.5" fill="#cfe2f3"/><path d="M603.7,540.8 L604.7,539.8 L609.7,539.8 L609.7,545.8 L608.7,546.8 L603.7,546.8 Z" fill="#4a96dc"/><path d="M603.7,540.8 L604.7,539.8 L609.7,539.8 L608.7,540.8Z" fill="#9bcaf2"/><rect x="64" y="549.5" width="530" height="0.5" fill="#c8c8c8"/><rect x="86.2" y="549.5" width="3.2" height="2.6" fill="#444"/><rect x="87.0" y="550.2" width="1.6" height="1.2" fill="#ddd"/><rect x="256.4" y="549.5" width="3.2" height="2.6" fill="#444"/><rect x="257.2" y="550.2" width="1.6" height="1.2" fill="#ddd"/><rect x="287.9" y="549.5" width="3.2" height="2.6" fill="#444"/><rect x="288.7" y="550.2" width="1.6" height="1.2" fill="#ddd"/><rect x="309.4" y="549.5" width="3.2" height="2.6" fill="#444"/><rect x="310.2" y="550.2" width="1.6" height="1.2" fill="#ddd"/><rect x="331.0" y="549.5" width="3.2" height="2.6" fill="#444"/><rect x="331.8" y="550.2" width="1.6" height="1.2" fill="#ddd"/><rect x="457.29999999999995" y="549.5" width="3.2" height="2.6" fill="#444"/><rect x="458.09999999999997" y="550.2" width="1.6" height="1.2" fill="#ddd"/><rect x="479.0" y="549.5" width="3.2" height="2.6" fill="#444"/><rect x="479.8" y="550.2" width="1.6" height="1.2" fill="#ddd"/><rect x="87.8" y="549.6" width="340" height="0.5" fill="#777"/><circle cx="624" cy="544.5" r="2.6" fill="none" stroke="#555" stroke-width="1.6" stroke-dasharray="1 0.6"/><circle cx="624" cy="544.5" r="2" fill="none" stroke="#555" stroke-width="1"/></svg>
<div class="ab" style="left:0;top:553.4px;width:634px;height:1.6px;background:#8e8e8e"></div>
<svg class="ab" style="left:0;top:0" width="634" height="555"><path d="M0,0 L3,0 Q0,0 0,3 Z" fill="#111"/><path d="M634,0 L631,0 Q634,0 634,3 Z" fill="#111"/><path d="M0,555 L0,551.5 Q0,555 3.5,555 Z" fill="#111"/><path d="M634,555 L634,551.5 Q634,555 630.5,555 Z" fill="#111"/></svg>
<div class="ab" style="left:0;top:0;width:1px;height:555px;background:#c6c6c6"></div>
<div class="ab" style="left:633.2px;top:0;width:0.8px;height:555px;background:#bdbdbd"></div>
</body></html>
